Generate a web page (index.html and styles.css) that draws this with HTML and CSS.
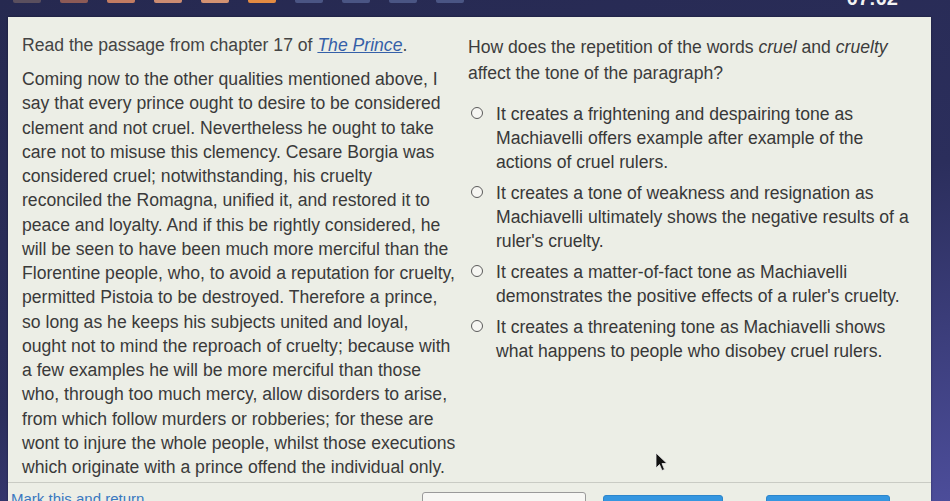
FILE: index.html
```html
<!DOCTYPE html>
<html>
<head>
<meta charset="utf-8">
<link rel="stylesheet" href="styles.css">
</head>
<body>
<div class="topbar">
  <div class="steps">
    <span class="step s1"></span>
    <span class="step s2"></span>
    <span class="step s3"></span>
    <span class="step s4"></span>
    <span class="step s5"></span>
    <span class="step s6"></span>
    <span class="step s7"></span>
    <span class="step s7"></span>
    <span class="step s7"></span>
    <span class="step s7"></span>
  </div>
  <div class="timer">07:02</div>
</div>
<div class="panel">
  <div class="columns">
    <div class="left">
      <p class="intro">Read the passage from chapter 17 of <a class="book">The Prince</a>.</p>
      <p class="passage">Coming now to the other qualities mentioned above, I<br>say that every prince ought to desire to be considered<br>clement and not cruel. Nevertheless he ought to take<br>care not to misuse this clemency. Cesare Borgia was<br>considered cruel; notwithstanding, his cruelty<br>reconciled the Romagna, unified it, and restored it to<br>peace and loyalty. And if this be rightly considered, he<br>will be seen to have been much more merciful than the<br>Florentine people, who, to avoid a reputation for cruelty,<br>permitted Pistoia to be destroyed. Therefore a prince,<br>so long as he keeps his subjects united and loyal,<br>ought not to mind the reproach of cruelty; because with<br>a few examples he will be more merciful than those<br>who, through too much mercy, allow disorders to arise,<br>from which follow murders or robberies; for these are<br>wont to injure the whole people, whilst those executions<br>which originate with a prince offend the individual only.</p>
    </div>
    <div class="right">
      <p class="question">How does the repetition of the words <i>cruel</i> and <i>cruelty</i><br>affect the tone of the paragraph?</p>
      <ul class="options">
        <li class="option"><span class="radio"></span><span class="otext">It creates a frightening and despairing tone as<br>Machiavelli offers example after example of the<br>actions of cruel rulers.</span></li>
        <li class="option"><span class="radio"></span><span class="otext">It creates a tone of weakness and resignation as<br>Machiavelli ultimately shows the negative results of a<br>ruler's cruelty.</span></li>
        <li class="option"><span class="radio"></span><span class="otext">It creates a matter-of-fact tone as Machiavelli<br>demonstrates the positive effects of a ruler's cruelty.</span></li>
        <li class="option"><span class="radio"></span><span class="otext">It creates a threatening tone as Machiavelli shows<br>what happens to people who disobey cruel rulers.</span></li>
      </ul>
    </div>
  </div>
  <div class="footer">
    <a class="mark">Mark this and return</a>
    <div class="buttons">
      <button class="btn outline">Save and Exit</button>
      <button class="btn blue">Next</button>
      <button class="btn blue">Submit</button>
    </div>
  </div>
  <svg class="cursor" width="14" height="20" viewBox="0 0 14 20"><path d="M1 1 L1 16 L4.5 12.5 L7 18.5 L9.5 17.5 L7 11.5 L12 11.5 Z" fill="#111" stroke="#eee" stroke-width="0.8"/></svg>
</div>
</body>
</html>
```
FILE: styles.css
```css
html, body {
  margin: 0;
  padding: 0;
  width: 950px;
  height: 501px;
  overflow: hidden;
}
body {
  background: linear-gradient(165deg, #262950 0%, #2b2e5c 55%, #4c4d9a 100%);
  font-family: "Liberation Sans", Arial, sans-serif;
  color: #3a3a3a;
}
.topbar {
  height: 17px;
  position: relative;
  overflow: hidden;
}
.steps {
  display: flex;
  gap: 19px;
  padding-left: 13px;
}
.step {
  display: block;
  width: 28px;
  height: 3px;
  border-radius: 0 0 2px 2px;
}
.s1 { background: #5a4f5e; }
.s2 { background: #8d5a56; }
.s3 { background: #c37c62; }
.s4 { background: #cc8c72; }
.s5 { background: #d39272; }
.s6 { background: #e38b42; }
.s7 { background: #4a5584; }
.timer {
  position: absolute;
  right: 52px;
  top: -13px;
  color: #f2f2f2;
  font-weight: bold;
  font-size: 20px;
}
.panel {
  margin-left: 8px;
  width: 923px;
  height: 484px;
  background: #eceee6;
  position: relative;
  box-shadow: 0 0 2px rgba(0,0,0,0.4);
}
.columns {
  display: flex;
  height: 465px;
}
.left {
  padding-left: 14px;
  width: 460px;
  flex: none;
  box-sizing: border-box;
  padding-top: 16px;
}
.intro {
  margin: 0;
  font-size: 17.6px;
  line-height: 24px;
  white-space: nowrap;
  color: #444;
}
.book {
  color: #3560a8;
  font-style: italic;
  text-decoration: underline;
}
.passage {
  margin: 10px 0 0 0;
  font-size: 17.6px;
  line-height: 24.25px;
  white-space: nowrap;
}
.right {
  flex: 1;
  padding-top: 17px;
}
.question {
  margin: 0;
  font-size: 17.6px;
  line-height: 26px;
  white-space: nowrap;
  color: #3c3c3c;
}
.options {
  list-style: none;
  margin: 16px 0 0 0;
  padding: 0;
  display: flex;
  flex-direction: column;
  gap: 7px;
}
.option {
  display: flex;
  align-items: flex-start;
}
.radio {
  flex: none;
  width: 10px;
  height: 10px;
  border: 1.6px solid #5a5a5a;
  border-radius: 50%;
  background: #f6f6f2;
  margin: 5px 13px 0 3px;
}
.otext {
  font-size: 17.6px;
  line-height: 24px;
  white-space: nowrap;
  color: #383838;
}
.footer {
  border-top: 1px solid #c9cbc4;
  display: flex;
  align-items: flex-start;
  height: 30px;
}
.mark {
  color: #3a78c0;
  font-size: 15px;
  padding: 7px 0 0 3px;
  width: 411px;
  flex: none;
}
.buttons {
  display: flex;
  gap: 17px;
  align-items: flex-start;
}
.btn {
  font-family: "Liberation Sans", Arial, sans-serif;
  font-size: 15px;
  border-radius: 3px;
  height: 34px;
}
.outline {
  margin-top: 9px;
  width: 164px;
  background: #f7f7f4;
  border: 1px solid #9a9a9a;
  color: #444;
}
.blue {
  margin-top: 12px;
  width: 120px;
  background: #3596e0;
  border: 1px solid #2c86cc;
  color: #fff;
}
.blue + .blue {
  margin-left: 26px;
  width: 124px;
}
.cursor {
  position: absolute;
  left: 647px;
  top: 435px;
}
```
